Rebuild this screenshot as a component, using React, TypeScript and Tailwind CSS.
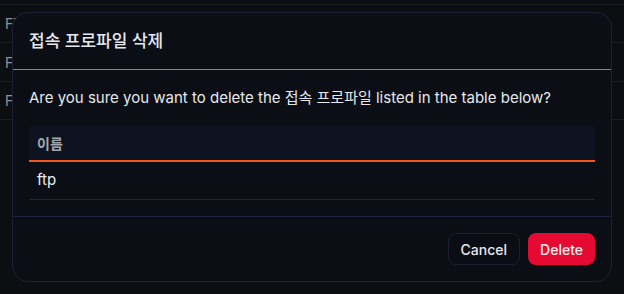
import React from "react";

const font = { fontFamily: 'Inter, "Noto Sans CJK KR", sans-serif' };

export default function App() {
  const rows = [38, 39, 38];
  return (
    <div
      className="relative w-[624px] h-[294px] overflow-hidden bg-[#0c0e11]"
      style={font}
    >
      {/* background table */}
      <div className="pt-[4px]">
        <div className="border-t border-[#1b1e24]">
          {rows.map((h, i) => (
            <div
              key={i}
              className="flex items-center border-b border-[#1b1e24] pl-[5px] text-[14px] text-[#8f939a]"
              style={{ height: h }}
            >
              FTP
            </div>
          ))}
        </div>
      </div>

      {/* dialog */}
      <div className="absolute left-[12px] top-[12px] w-[600px] rounded-2xl border border-[#1d2133] bg-[#0b0e15] flex flex-col">
        <div className="px-4 py-4 border-b border-[#e0683c]">
          <h2 className="text-[17px] leading-6 font-medium text-[#e6e8ec]">
            접속 프로파일 삭제
          </h2>
        </div>
        <div className="p-4 border-b border-[#1c2240]">
          <p className="text-[15px] leading-6 text-[#e6e8ec]">
            Are you sure you want to delete the 접속 프로파일 listed in the table below?
          </p>
          <div className="mt-4">
            <div className="h-[36px] flex items-center px-2 bg-[#0e1322] border-b-2 border-[#f4581f]">
              <span className="text-[14px] font-semibold text-[#a4a7ae]">이름</span>
            </div>
            <div className="h-[38px] flex items-center px-2 border-b border-[#22252f]">
              <span className="text-[15px] text-[#eceef1]">ftp</span>
            </div>
          </div>
        </div>
        <div className="flex justify-end gap-2 p-4">
          <button className="h-[32px] px-3 rounded-lg border border-[#1c2030] bg-[#0a0d14] text-[14px] font-medium text-[#e6e8ec]">
            Cancel
          </button>
          <button className="h-[32px] px-3 rounded-lg bg-[#e60a32] text-[14px] font-medium text-[#fbeef0]">
            Delete
          </button>
        </div>
      </div>
    </div>
  );
}
